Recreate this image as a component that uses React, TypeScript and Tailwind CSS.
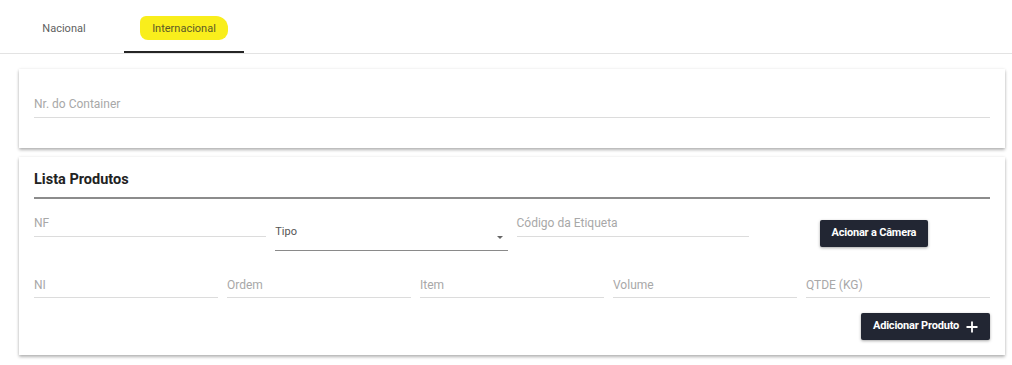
import React from "react";

const font = { fontFamily: "Roboto, 'Liberation Sans', sans-serif" };

function Field({ label }: { label: string }) {
  return (
    <div className="border-b border-[#dcdcdc] pb-[4px]">
      <div className="text-[12px] leading-[16px] text-[#a8a8a8]">{label}</div>
    </div>
  );
}

export default function App() {
  return (
    <div className="w-[1012px] h-[365px] bg-white overflow-hidden" style={font}>
      {/* Tabs */}
      <div className="flex pl-[4px] border-b border-[#e3e3e3] h-[54px]">
        <div className="w-[120px] h-[53px] flex items-center justify-center pt-[5px] text-[11px] text-[#5f5f5f]">
          Nacional
        </div>
        <div className="relative w-[120px] h-[53px] flex items-center justify-center pt-[3px]">
          <span className="px-[12px] pt-[5px] pb-[4px] bg-[#f9ee1c] rounded-[6px_12px_9px_8px] text-[11px] leading-[15px] text-[#5b5a27]">
            Internacional
          </span>
          <div className="absolute left-0 right-0 bottom-0 h-[2px] bg-[#252525]" />
        </div>
      </div>

      <div className="ml-[19px] mr-[7px] mt-[15px]">
        {/* Card 1 */}
        <div className="bg-white shadow-[0_2px_3px_rgba(0,0,0,0.28),0_0_3px_rgba(0,0,0,0.08)] px-[15px] pt-[27px] pb-[30px]">
          <div className="border-b border-[#dcdcdc] pb-[5px]">
            <div className="text-[12px] leading-[16px] text-[#a8a8a8]">Nr. do Container</div>
          </div>
        </div>

        {/* Card 2 */}
        <div className="mt-[9px] bg-white shadow-[0_2px_3px_rgba(0,0,0,0.28),0_0_3px_rgba(0,0,0,0.08)] px-[15px] pt-[13px] pb-[15px]">
          <div className="border-b-2 border-[#8c8c8c] pb-[7px]">
            <div className="text-[14.5px] leading-[20px] font-bold text-[#222]">Lista Produtos</div>
          </div>

          <div className="grid grid-cols-4 gap-x-[9px] items-start mt-[16px]">
            <div className="border-b border-[#dcdcdc] pb-[5px]">
              <div className="text-[12px] leading-[16px] text-[#a8a8a8]">NF</div>
            </div>
            <div className="relative border-b border-[#8a8a8a] pt-[9px] pb-[10px]">
              <div className="text-[11px] leading-[16px] text-[#555]">Tipo</div>
              <div className="absolute right-[5px] top-[21px] w-0 h-0 border-l-[3px] border-r-[3px] border-t-[3px] border-l-transparent border-r-transparent border-t-[#666]" />
            </div>
            <div className="border-b border-[#dcdcdc] pb-[5px]">
              <div className="text-[12px] leading-[16px] text-[#a8a8a8]">Código da Etiqueta</div>
            </div>
            <div className="flex justify-center pt-[5px]">
              <button className="w-[108px] h-[27px] bg-[#222633] rounded-[2px] shadow-[0_1px_3px_rgba(0,0,0,0.35)] text-white text-[11px] font-bold tracking-[-0.2px]">
                Acionar a Câmera
              </button>
            </div>
          </div>

          <div className="grid grid-cols-5 gap-x-[9px] mt-[26px]">
            <Field label="NI" />
            <Field label="Ordem" />
            <Field label="Item" />
            <Field label="Volume" />
            <Field label="QTDE (KG)" />
          </div>

          <div className="flex justify-end mt-[15px]">
            <button className="w-[129px] h-[27px] bg-[#222633] rounded-[2px] shadow-[0_1px_3px_rgba(0,0,0,0.35)] text-white text-[11px] font-bold tracking-[-0.2px] flex items-center justify-center gap-[7px]">
              <span>Adicionar Produto</span>
              <svg width="12" height="12" viewBox="0 0 12 12">
                <path d="M6 0.5v11M0.5 6h11" stroke="white" strokeWidth="1.8" />
              </svg>
            </button>
          </div>
        </div>
      </div>
    </div>
  );
}
